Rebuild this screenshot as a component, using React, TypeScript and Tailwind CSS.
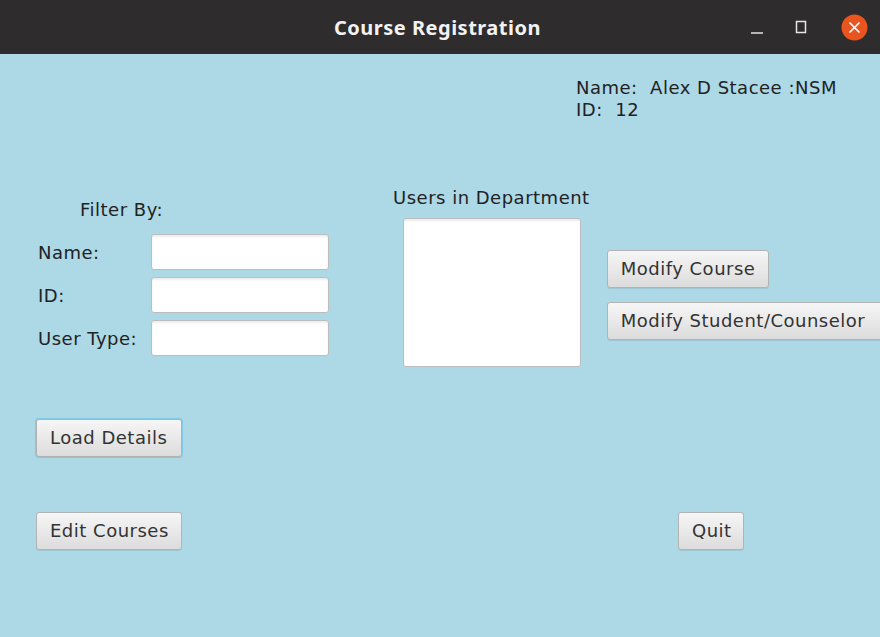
const btn =
  "flex h-[38px] items-center whitespace-nowrap rounded-[3px] border border-[#b3b3b3] bg-gradient-to-b from-[#f6f6f6] to-[#dcdcdc] px-[13px] text-[18px] leading-none text-[#333333] shadow-[0_1px_0_rgba(0,0,0,0.08)]";

const field =
  "h-[36px] w-[178px] rounded-[3px] border border-[#bdbdbd] bg-white shadow-[inset_0_2px_2px_rgba(0,0,0,0.08)]";

function TitleBar() {
  return (
    <div className="relative flex h-[54px] items-center justify-center bg-[#2e2c2c]">
      <span className="mt-[2px] pr-[5px] text-[20px] font-bold text-[#f2f2f2] [font-family:'Noto_Sans',sans-serif]">
        Course Registration
      </span>
      <div className="absolute right-0 top-0 flex h-[54px] items-center">
        <svg width="14" height="14" viewBox="0 0 14 14" className="mr-[30px] mt-[6px]">
          <line x1="1" y1="10" x2="13" y2="10" stroke="#d8d8d8" strokeWidth="1.6" />
        </svg>
        <svg width="14" height="14" viewBox="0 0 14 14" className="mr-[33px]">
          <rect x="2.5" y="1.5" width="9" height="11" fill="none" stroke="#e6e6e6" strokeWidth="1.5" />
        </svg>
        <svg width="27" height="27" viewBox="0 0 27 27" className="mr-[12px]">
          <circle cx="13.5" cy="13.5" r="13" fill="#e9541f" />
          <path d="M9 9 L18 18 M18 9 L9 18" stroke="#fff" strokeWidth="1.7" strokeLinecap="round" />
        </svg>
      </div>
    </div>
  );
}

export default function App() {
  return (
    <div className="h-[637px] w-[880px] overflow-hidden bg-[#add8e6] text-[18px] tracking-[0.5px] text-[#222222] [font-family:'DejaVu_Sans',sans-serif]">
      <TitleBar />

      <div className="ml-[576px] mt-[23px] whitespace-nowrap leading-[22px]">
        <div>Name:&nbsp; Alex D Stacee :NSM</div>
        <div>ID:&nbsp; 12</div>
      </div>

      <div className="mt-[67px] flex h-[179px]">
        <div className="ml-[38px] mt-[12px] flex w-[291px] flex-col">
          <div className="ml-[42px] whitespace-nowrap leading-[20px]">Filter By:</div>
          <div className="mt-[14px] flex flex-col gap-[7px]">
            <div className="flex items-center">
              <span className="w-[113px] whitespace-nowrap">Name:</span>
              <div className={field} />
            </div>
            <div className="flex items-center">
              <span className="w-[113px] whitespace-nowrap">ID:</span>
              <div className={field} />
            </div>
            <div className="flex items-center">
              <span className="w-[113px] whitespace-nowrap">User Type:</span>
              <div className={field} />
            </div>
          </div>
        </div>

        <div className="ml-[64px] flex w-[197px] flex-col">
          <div className="whitespace-nowrap leading-[20px]">Users in Department</div>
          <div className="ml-[10px] mt-[10px] h-[149px] w-[178px] rounded-[3px] border border-[#bdbdbd] bg-white shadow-[inset_0_2px_2px_rgba(0,0,0,0.08)]" />
        </div>

        <div className="ml-[17px] mt-[62px] flex flex-col gap-[14px]">
          <button className={`${btn} w-[162px]`}>Modify Course</button>
          <button className={`${btn} w-[276px]`}>Modify Student/Counselor</button>
        </div>
      </div>

      <div className="ml-[36px] mt-[52px]">
        <button className={`${btn} w-[146px] border-[#1a9fd6] ring-1 ring-[#7fc8e8]`}>Load Details</button>
      </div>

      <div className="mt-[55px] flex">
        <button className={`${btn} ml-[36px] w-[146px]`}>Edit Courses</button>
        <button className={`${btn} ml-[496px] w-[66px]`}>Quit</button>
      </div>
    </div>
  );
}
